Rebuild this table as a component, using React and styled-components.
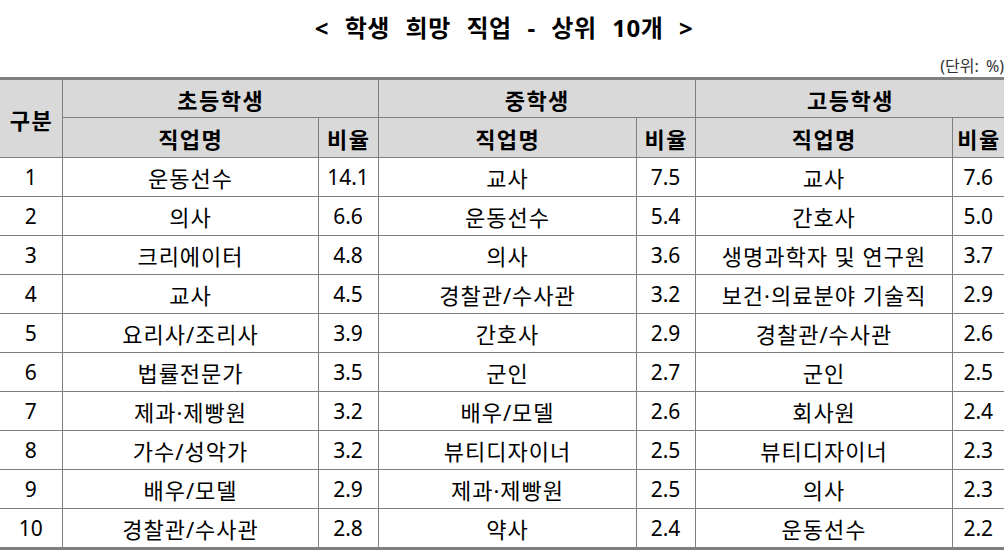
import React from "react";
import styled, { createGlobalStyle } from "styled-components";

const Global = createGlobalStyle`
  html, body { margin: 0; padding: 0; background: #fff; }
  body { font-family: "Noto Sans", "Noto Sans CJK KR", sans-serif; color: #000; }
`;

const Page = styled.div`
  width: 1008px;
  height: 554px;
  display: flex;
  flex-direction: column;
  overflow: hidden;
`;

const Title = styled.h1`
  margin: 0;
  height: 53px;
  display: flex;
  align-items: center;
  justify-content: center;
  font-size: 24px;
  font-weight: 700;
  word-spacing: 9px;
  letter-spacing: 0.5px;
`;

const Unit = styled.div`
  height: 24px;
  padding-right: 4px;
  display: flex;
  align-items: center;
  justify-content: flex-end;
  font-size: 16px;
  color: #333;
  word-spacing: 3px;
`;

const Table = styled.table`
  width: 1004px;
  border-collapse: collapse;
  table-layout: fixed;
  border-top: 3px solid #7f7f7f;
  border-bottom: 3px solid #7f7f7f;
`;

const HeadCell = styled.th`
  background: #d9d9d9;
  font-weight: 700;
  font-size: 22px;
  letter-spacing: 1.5px;
  height: ${(p) => p.$h || 37}px;
  padding: 0 0 0 1.5px;
  text-align: center;
  border: 1px solid #7f7f7f;
  &:first-child { border-left: none; }
  &:last-child { border-right: none; }
`;

const Cell = styled.td`
  font-size: ${(p) => (p.$num ? 21 : 22)}px;
  letter-spacing: ${(p) => (p.$num ? 0 : 1)}px;
  height: 38px;
  padding: 0 0 0 ${(p) => (p.$num ? 0 : 1)}px;
  text-align: center;
  border: 1px solid #7f7f7f;
  white-space: nowrap;
  &:first-child { border-left: none; }
  &:last-child { border-right: none; }
`;

const rows = [
  ["운동선수", "14.1", "교사", "7.5", "교사", "7.6"],
  ["의사", "6.6", "운동선수", "5.4", "간호사", "5.0"],
  ["크리에이터", "4.8", "의사", "3.6", "생명과학자 및 연구원", "3.7"],
  ["교사", "4.5", "경찰관/수사관", "3.2", "보건·의료분야 기술직", "2.9"],
  ["요리사/조리사", "3.9", "간호사", "2.9", "경찰관/수사관", "2.6"],
  ["법률전문가", "3.5", "군인", "2.7", "군인", "2.5"],
  ["제과·제빵원", "3.2", "배우/모델", "2.6", "회사원", "2.4"],
  ["가수/성악가", "3.2", "뷰티디자이너", "2.5", "뷰티디자이너", "2.3"],
  ["배우/모델", "2.9", "제과·제빵원", "2.5", "의사", "2.3"],
  ["경찰관/수사관", "2.8", "약사", "2.4", "운동선수", "2.2"],
];

const widths = [62, 256, 60, 258, 59, 257, 52];

export default function App() {
  return (
    <Page>
      <Global />
      <Title>&lt; 학생 희망 직업 - 상위 10개 &gt;</Title>
      <Unit>(단위: %)</Unit>
      <Table>
        <colgroup>
          {widths.map((w, i) => (
            <col key={i} style={{ width: w }} />
          ))}
        </colgroup>
        <thead>
          <tr>
            <HeadCell rowSpan={2}>구분</HeadCell>
            <HeadCell colSpan={2} $h={37}>초등학생</HeadCell>
            <HeadCell colSpan={2} $h={37}>중학생</HeadCell>
            <HeadCell colSpan={2} $h={37}>고등학생</HeadCell>
          </tr>
          <tr>
            <HeadCell $h={39}>직업명</HeadCell>
            <HeadCell $h={39}>비율</HeadCell>
            <HeadCell $h={39}>직업명</HeadCell>
            <HeadCell $h={39}>비율</HeadCell>
            <HeadCell $h={39}>직업명</HeadCell>
            <HeadCell $h={39}>비율</HeadCell>
          </tr>
        </thead>
        <tbody>
          {rows.map((r, i) => (
            <tr key={i}>
              <Cell $num>{i + 1}</Cell>
              {r.map((c, j) => (
                <Cell key={j} $num={j % 2 === 1}>
                  {c}
                </Cell>
              ))}
            </tr>
          ))}
        </tbody>
      </Table>
    </Page>
  );
}
